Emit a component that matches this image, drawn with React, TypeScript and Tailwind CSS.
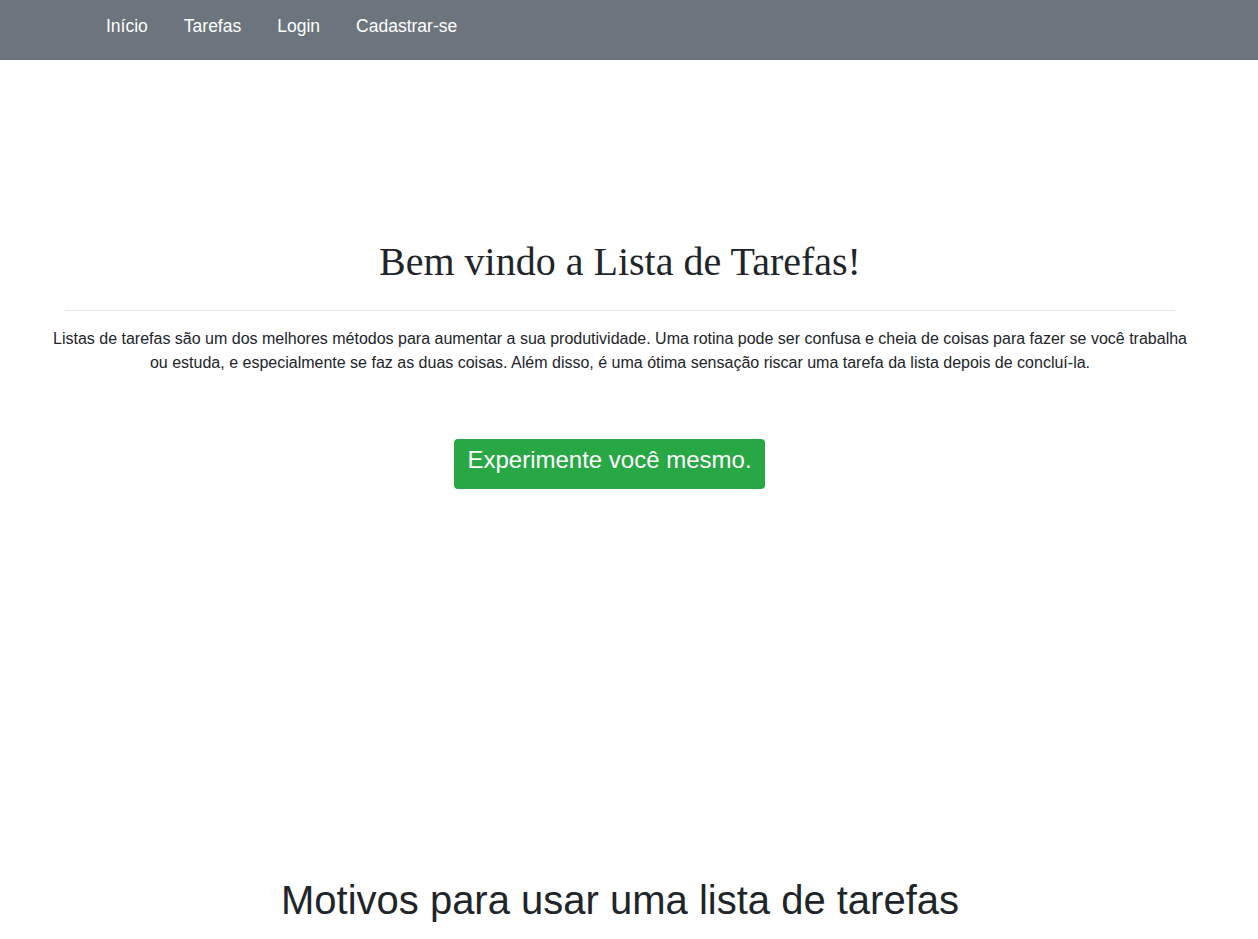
export default function App() {
  const sans = { fontFamily: '"Liberation Sans", Arial, sans-serif' };
  return (
    <div className="min-h-[939px] bg-white text-[#212529]" style={sans}>
      <nav className="h-[60px] bg-[#6c757d]">
        <ul className="flex pl-[88px] pt-[13px]">
          {["Início", "Tarefas", "Login", "Cadastrar-se"].map((t) => (
            <li key={t}>
              <a className="block px-[18px] text-[17.5px] leading-[26px] text-white">{t}</a>
            </li>
          ))}
        </ul>
      </nav>
      <div className="w-[1240px]">
        <div className="mx-auto w-[1140px] pt-[178px] text-center">
          <h1
            className="text-[40px] leading-[48px] mb-[24px]"
            style={{ fontFamily: '"Liberation Serif", "Times New Roman", serif' }}
          >
            Bem vindo a Lista de Tarefas!
          </h1>
          <hr className="mx-[15px] mt-[24px] mb-[16px] border-0 border-t border-[#e5e5e5]" />
          <p className="text-[16px] leading-[24px]">
            Listas de tarefas são um dos melhores métodos para aumentar a sua produtividade. Uma rotina pode ser confusa e cheia de coisas para fazer se você trabalha ou estuda, e especialmente se faz as duas coisas. Além disso, é uma ótima sensação riscar uma tarefa da lista depois de concluí-la.
          </p>
          <div className="flex justify-center pr-[21px] mt-[64px]">
            <a className="block h-[50px] rounded-[4px] bg-[#28a745] px-[13.5px] text-[24px] leading-[42px] text-white">
              Experimente você mesmo.
            </a>
          </div>
          <h2 className="mt-[387px] text-[40px] leading-[48px]">Motivos para usar uma lista de tarefas</h2>
        </div>
      </div>
    </div>
  );
}
